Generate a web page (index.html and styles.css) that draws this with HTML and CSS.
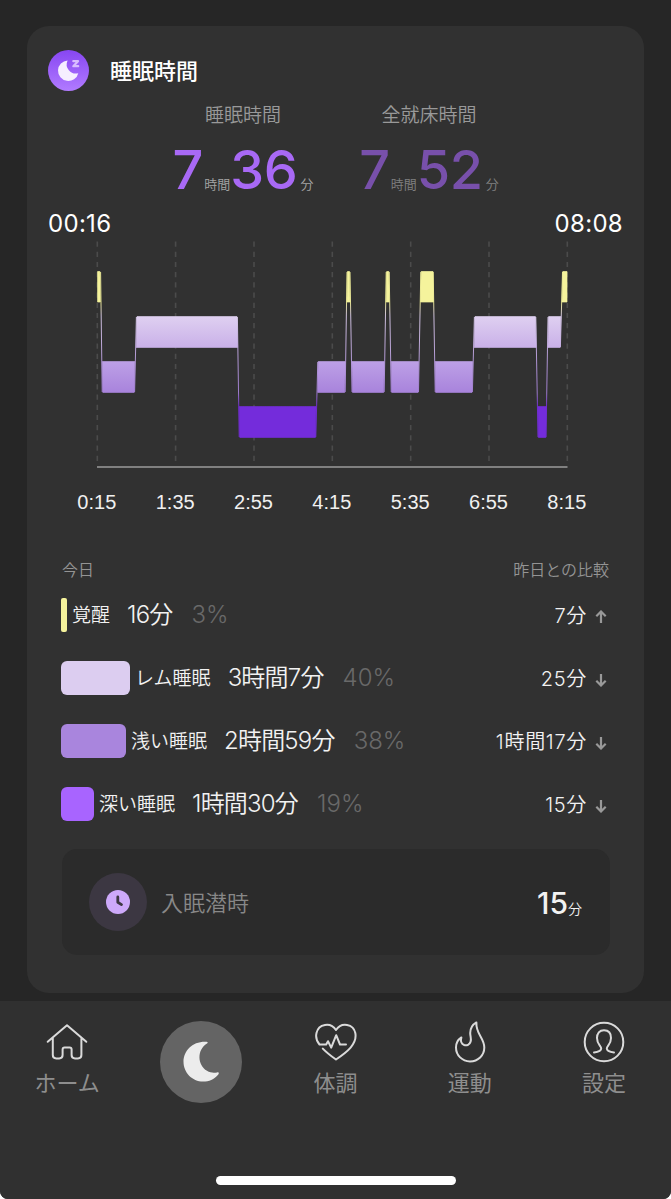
FILE: index.html
```html
<!DOCTYPE html>
<html lang="ja">
<head>
  <meta charset="UTF-8">
  <meta name="viewport" content="width=device-width, initial-scale=1.0">
  <title>睡眠時間</title>
  <link rel="stylesheet" href="styles.css">
</head>
<body>
  <div class="screen">
    <div class="card">
      <div class="card-header">
        <svg class="card-icon" viewBox="0 0 41 41">
          <defs>
            <linearGradient id="iconBg" x1="0" y1="0" x2="0" y2="1">
              <stop offset="0" stop-color="#8746f2"/>
              <stop offset="1" stop-color="#b17bff"/>
            </linearGradient>
          </defs>
          <circle cx="20.5" cy="20.5" r="20.5" fill="url(#iconBg)"/>
          <path d="M19.6 10.4A10.3 10.3 0 1 0 30.3 23.2A9.2 9.2 0 0 1 19.6 10.4Z" fill="#f6efff"/>
          <path d="M25.3 11.2H30L25.3 16.2H30.2" fill="none" stroke="#d8bcff" stroke-width="2.2" stroke-linejoin="round" stroke-linecap="round"/>
        </svg>
        <h1>睡眠時間</h1>
      </div>

      <div class="totals">
        <div class="total">
          <div class="total-label">睡眠時間</div>
          <div class="total-value"><b class="hour">7</b><small>時間</small><b>36</b><small class="min">分</small></div>
        </div>
        <div class="total in-bed">
          <div class="total-label">全就床時間</div>
          <div class="total-value"><b class="hour">7</b><small>時間</small><b>52</b><small class="min">分</small></div>
        </div>
      </div>

      <div class="range">
        <span>00:16</span>
        <span>08:08</span>
      </div>

      <svg class="chart" viewBox="27 240 617 280">
        <defs>
          <linearGradient id="stage" gradientUnits="userSpaceOnUse" x1="0" y1="271" x2="0" y2="438">
            <stop offset="0" stop-color="#f5f39c"/>
            <stop offset="0.19" stop-color="#f5f39c"/>
            <stop offset="0.27" stop-color="#dfd0f1"/>
            <stop offset="0.46" stop-color="#c9b0e8"/>
            <stop offset="0.54" stop-color="#bda0e6"/>
            <stop offset="0.73" stop-color="#a883dc"/>
            <stop offset="0.81" stop-color="#742cdb"/>
            <stop offset="1" stop-color="#742cdb"/>
          </linearGradient>
        </defs>
        <g class="grid-lines">
          <path d="M97.3 241.5V462M175.6 241.5V462M254 241.5V462M332.3 241.5V462M410.7 241.5V462M489 241.5V462M567.3 241.5V462"/>
        </g>
        <path class="axis" d="M97 467H567.5"/>
        <!-- transitions between stages -->
        <path class="links" stroke="url(#stage)" d="M100.6 272L102.2 392M134.6 392L136.4 317M237.4 317L239.2 437M315.8 437L317.8 362M345.2 392L347 272M350 272L352 392M384.2 392L386.2 272M389.2 272L391.2 392M418.5 392L420.8 272M433.2 272L435.2 392M472.4 392L474.4 317M535.8 317L538 437M546 437L548 317M560.4 347L562.5 272"/>
        <!-- awake -->
        <g fill="#f5f39c" stroke="#f5f39c" class="blocks">
          <path d="M97.6 271.5H99.9L100.3 302H97.6Z"/>
          <path d="M347.5 271.5H349.5L350 302H347Z"/>
          <path d="M386.7 271.5H388.8L389.2 302H386.2Z"/>
          <path d="M421.2 271.5H433L433.4 302H420.6Z"/>
          <path d="M562.8 271.5H567V302H562Z"/>
        </g>
        <!-- rem / light / deep -->
        <g fill="url(#stage)" stroke="url(#stage)" class="blocks">
          <path d="M137 316.6H237L237.6 347.4H136.2Z"/>
          <path d="M475 316.6H535.4L536.2 347.4H474.2Z"/>
          <path d="M548.6 316.6H560.8L560.2 347.4H548Z"/>
          <path d="M102.3 361.6H134.8L134.2 392.4H102.8Z"/>
          <path d="M318.2 361.6H345.2L344.7 392.4H317.7Z"/>
          <path d="M352 361.6H384.2L383.7 392.4H352.5Z"/>
          <path d="M391.2 361.6H418.6L418.1 392.4H391.7Z"/>
          <path d="M435.2 361.6H472.6L472 392.4H435.7Z"/>
          <path d="M239.2 406.6H316L315.4 437.4H239.8Z"/>
          <path d="M538 406.6H546.3L545.8 437.4H538.4Z"/>
        </g>
        <g class="ticks">
          <text x="96.8" y="508.5">0:15</text>
          <text x="175.2" y="508.5">1:35</text>
          <text x="253.5" y="508.5">2:55</text>
          <text x="331.8" y="508.5">4:15</text>
          <text x="410.2" y="508.5">5:35</text>
          <text x="488.5" y="508.5">6:55</text>
          <text x="566.8" y="508.5">8:15</text>
        </g>
      </svg>

      <div class="list-head">
        <span>今日</span>
        <span>昨日との比較</span>
      </div>

      <div class="row">
        <i class="bar awake"></i>
        <span class="name">覚醒</span>
        <span class="value">16分</span>
        <span class="percent">3%</span>
        <span class="diff">7分</span>
        <svg class="arrow" viewBox="0 0 12 14"><path d="M6 13V2M1.3 6.2L6 1.5L10.7 6.2"/></svg>
      </div>
      <div class="row">
        <i class="bar rem"></i>
        <span class="name">レム睡眠</span>
        <span class="value">3時間7分</span>
        <span class="percent">40%</span>
        <span class="diff">25分</span>
        <svg class="arrow" viewBox="0 0 12 14"><path d="M6 1V12M1.3 7.8L6 12.5L10.7 7.8"/></svg>
      </div>
      <div class="row">
        <i class="bar light"></i>
        <span class="name">浅い睡眠</span>
        <span class="value">2時間59分</span>
        <span class="percent">38%</span>
        <span class="diff">1時間17分</span>
        <svg class="arrow" viewBox="0 0 12 14"><path d="M6 1V12M1.3 7.8L6 12.5L10.7 7.8"/></svg>
      </div>
      <div class="row">
        <i class="bar deep"></i>
        <span class="name">深い睡眠</span>
        <span class="value">1時間30分</span>
        <span class="percent">19%</span>
        <span class="diff">15分</span>
        <svg class="arrow" viewBox="0 0 12 14"><path d="M6 1V12M1.3 7.8L6 12.5L10.7 7.8"/></svg>
      </div>

      <div class="latency">
        <div class="latency-icon">
          <svg width="24" height="24" viewBox="0 0 24 24">
            <circle cx="12" cy="12" r="12" fill="#cda9fa"/>
            <path d="M11.8 7V12.3L15.5 14.6" fill="none" stroke="#3c3742" stroke-width="2.8" stroke-linecap="round" stroke-linejoin="round"/>
          </svg>
        </div>
        <span class="latency-label">入眠潜時</span>
        <span class="latency-value">15<small>分</small></span>
      </div>
    </div>

    <nav class="tabbar">
      <a class="tab">
        <svg width="42" height="42" viewBox="0 0 42 42">
          <path d="M1.7 20.8L21 4.2L40.3 20.8M6.8 17V34Q6.8 37.4 10.2 37.4H13.2Q16.6 37.4 16.6 34V28.4Q16.6 26.4 18.6 26.4H23.6Q25.6 26.4 25.6 28.4V34Q25.6 37.4 29 37.4H32Q35.4 37.4 35.4 34V17"/>
        </svg>
        <span>ホーム</span>
      </a>
      <a class="tab active">
        <svg width="82" height="82" viewBox="0 0 82 82">
          <circle cx="41" cy="41" r="41" fill="#646464"/>
          <path d="M46.5 20.7C48 20.7 48 21.8 47 22.4C36.5 29 37.5 44 47 49.8C50.5 52 54 51.9 57 51.4C59 51 59.3 52 58.3 53.4C54 58.3 49 60.6 43.2 60.6C32 60.6 23.5 51.5 23.5 40.8C23.5 29.5 32.5 20 46.5 20.7Z" fill="#ececec"/>
        </svg>
      </a>
      <a class="tab">
        <svg width="42" height="42" viewBox="0 0 42 42">
          <path d="M4.5 23.5C1 19.5 .8 15 1.5 12C3.5 3 15.5 .5 21 9C26.5 .5 38.5 3 40.3 12C42.5 23 32 31 21 38.5C16.5 35.3 12.5 32.5 7.8 27.6M4.8 23.5H11.2L13 20.2L16.2 26.6L21.2 14.2L25 23.5H31"/>
        </svg>
        <span>体調</span>
      </a>
      <a class="tab">
        <svg width="42" height="42" viewBox="0 0 42 42">
          <path d="M27.4 1.4C24 3.4 21.2 7 21.2 12C21.2 15.5 22.6 17.5 21.6 20.6C20.7 23.6 17.8 25 15.2 24C12.3 22.8 11.2 20.2 12.4 16.4C9 18.6 7 22.4 7 26.5C7 34.4 13.2 40.4 21 40.4C29 40.4 35.3 34.4 35.3 26.5C35.3 17 26.6 13 27.4 1.4Z"/>
        </svg>
        <span>運動</span>
      </a>
      <a class="tab">
        <svg width="42" height="42" viewBox="0 0 42 42">
          <circle cx="21" cy="21" r="19.3"/>
          <path d="M11 31.4C15.5 31 18.2 30 18.2 27.6C18.2 25 14 23.5 14 17C14 12.2 16.5 9.2 21 9.2C25.5 9.2 28 12.2 28 17C28 23.5 23.8 25 23.8 27.6C23.8 30 26.5 31 31 31.4"/>
        </svg>
        <span>設定</span>
      </a>
    </nav>
    <div class="home-area">
      <div class="home-indicator"></div>
    </div>
  </div>
</body>
</html>
```
FILE: styles.css
```css
* {
  box-sizing: border-box;
}
body {
  margin: 0;
  background-color: #fff;
  font-family: Inter, "Noto Sans CJK JP", sans-serif;
  color: #f2f2f2;
}
.screen {
  width: 671px;
  height: 1199px;
  padding-top: 26px;
  background-color: #262626;
  border-radius: 0 0 8px 8px;
  overflow: hidden;
}
.card {
  height: 967px;
  margin: 0 27px 8px;
  padding-top: 24px;
  background-color: #313131;
  border-radius: 22px;
}
.card-header {
  display: flex;
  align-items: center;
  gap: 21px;
  height: 41px;
  padding-left: 21px;
}
.card-icon {
  width: 41px;
  height: 41px;
}
h1 {
  margin: 0;
  font-size: 22px;
  line-height: 30px;
  font-weight: 500;
  color: #fff;
}

/* 合計 */
.totals {
  display: flex;
  height: 113px;
  padding: 11px 0 0 123px;
}
.total {
  width: 186px;
  text-align: center;
}
.total-label {
  font-size: 19px;
  line-height: 28px;
  font-weight: 350;
  color: #999;
}
.total-value {
  margin-top: 5px;
  line-height: 70px;
  white-space: nowrap;
  color: #a869f5;
}
.total-value b {
  font-size: 54px;
  font-weight: 450;
  letter-spacing: -0.3px;
}
.total-value .hour {
  margin-right: 1px;
}
.total-value small {
  font-size: 13px;
  font-weight: 350;
  color: #a5a5a5;
}
.total-value .min {
  margin-left: 3px;
}
.in-bed .total-value {
  color: #7850ab;
}
.in-bed small {
  color: #808080;
}
.range {
  display: flex;
  justify-content: space-between;
  height: 36px;
  padding: 5px 21px 0;
  font-size: 24px;
  line-height: 30px;
  letter-spacing: 0.3px;
  color: #fff;
}

/* グラフ */
.chart {
  display: block;
  width: 617px;
  height: 280px;
}
.grid-lines {
  fill: none;
  stroke: #4b4b4b;
  stroke-width: 1.6;
  stroke-dasharray: 5.2 5;
}
.axis {
  stroke: #808080;
  stroke-width: 1.8;
}
.links {
  fill: none;
  stroke-width: 0.9;
}
.blocks {
  stroke-width: 0.7;
  stroke-linejoin: round;
}
.ticks text {
  font-family: "Liberation Sans", Arial, sans-serif;
  font-size: 20px;
  text-anchor: middle;
  fill: #f0f0f0;
}

/* 睡眠ステージ一覧 */
.list-head {
  display: flex;
  justify-content: space-between;
  height: 63px;
  padding: 38px 35px 0;
  font-size: 16px;
  line-height: 24px;
  font-weight: 350;
  color: #949494;
}
.row {
  display: flex;
  align-items: center;
  height: 63px;
  padding: 0 37px 0 34px;
  line-height: 30px;
  white-space: nowrap;
}
.bar {
  height: 34px;
  border-radius: 6px;
}
.awake {
  width: 6px;
  border-radius: 2px;
  background-color: #f5f39c;
}
.rem {
  width: 69px;
  background-color: #dccdf0;
}
.light {
  width: 65px;
  background-color: #a985dd;
}
.deep {
  width: 33px;
  background-color: #a864ff;
}
.name {
  margin: 2px 0 0 5px;
  font-size: 19px;
  font-weight: 350;
}
.value {
  margin: 1px 0 0 17px;
  font-size: 24px;
  font-weight: 350;
  letter-spacing: -0.8px;
}
.percent {
  margin-left: 19px;
  font-size: 24px;
  font-weight: 300;
  color: #696969;
}
.diff {
  margin: 2px 0 0 auto;
  font-size: 20px;
  font-weight: 350;
  letter-spacing: 0.7px;
}
.arrow {
  width: 12px;
  height: 14px;
  margin: 4px 0 0 8px;
  fill: none;
  stroke: #999;
  stroke-width: 2.2;
}

/* 入眠潜時 */
.latency {
  display: flex;
  align-items: center;
  height: 106px;
  margin: 14px 34px 0 35px;
  padding: 0 28px 0 27px;
  background-color: #2b2b2b;
  border-radius: 15px;
}
.latency-icon {
  display: flex;
  align-items: center;
  justify-content: center;
  width: 58px;
  height: 58px;
  border-radius: 50%;
  background-color: #3c3742;
}
.latency-label {
  margin: 0 0 3px 14px;
  font-size: 22px;
  font-weight: 350;
  color: #888;
}
.latency-value {
  margin: 2px 0 0 auto;
  font-size: 30px;
  font-weight: 500;
}
.latency-value small {
  font-size: 14px;
  font-weight: 350;
}

/* 下部タブ */
.tabbar {
  display: flex;
  height: 150px;
  background-color: #303030;
}
.tab {
  display: flex;
  flex: 1;
  flex-direction: column;
  align-items: center;
  padding: 20px 0 0;
  font-size: 22px;
  line-height: 30px;
  color: #8e8e8e;
}
.tab svg {
  fill: none;
  stroke: #dadada;
  stroke-width: 2;
  stroke-linecap: round;
  stroke-linejoin: round;
}
.tab span {
  margin-top: 5px;
}
.active svg {
  stroke: none;
}
.home-area {
  height: 48px;
  padding-top: 25px;
  background-color: #303030;
}
.home-indicator {
  width: 240px;
  height: 9px;
  margin: 0 auto;
  border-radius: 5px;
  background-color: #fff;
}
```
